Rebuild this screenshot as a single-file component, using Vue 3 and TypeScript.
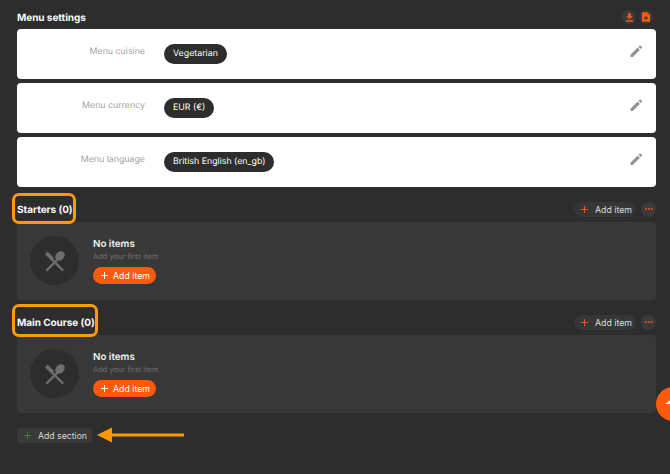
<script setup lang="ts">
interface Setting { label: string; value: string }
const settings: Setting[] = [
  { label: 'Menu cuisine', value: 'Vegetarian' },
  { label: 'Menu currency', value: 'EUR (€)' },
  { label: 'Menu language', value: 'British English (en_gb)' },
]
const sections: string[] = ['Starters (0)', 'Main Course (0)']
</script>

<template>
  <div class="page">
    <header class="top">
      <h1>Menu settings</h1>
      <div class="top-icons">
        <span class="round">
          <svg width="7" height="9" viewBox="0 0 10 12"><path d="M3 0h4v4h2.600L5 8.400.4 4H3zM0 10h10v2H0z" fill="#ff5a0a"/></svg>
        </span>
        <span class="round">
          <svg width="8" height="10" viewBox="0 0 10 12"><path fill-rule="evenodd" d="M0 0h6.500L10 3.500V12H0zM5 5.200a2 2 0 1 0 0 4a2 2 0 0 0 0-4z" fill="#ff5a0a"/></svg>
        </span>
      </div>
    </header>

    <div class="cards">
      <div v-for="s in settings" :key="s.label" class="card">
        <span class="label">{{ s.label }}</span>
        <span class="pill">{{ s.value }}</span>
        <svg class="pencil" width="12" height="12" viewBox="0 0 12 12"><path d="M.5 12V9.700L7.600 2.600 9.900 4.900 2.800 12zM8.400 1.800 9.500.7a1 1 0 0 1 1.300 0l1 1a1 1 0 0 1 0 1.300l-1.100 1.100z" fill="#949494"/></svg>
      </div>
    </div>

    <section v-for="name in sections" :key="name" class="section">
      <div class="sec-head">
        <h2 class="sec-title">{{ name }}</h2>
        <div class="sec-actions">
          <button class="ghost">
            <svg class="cross" width="7" height="7" viewBox="0 0 7 7"><path d="M3 0h1v3h3v1H4v3H3V4H0V3h3z" fill="#f0561a"/></svg>
            Add item
          </button>
          <span class="more"><i></i><i></i><i></i></span>
        </div>
      </div>
      <div class="panel">
        <div class="disc">
          <svg width="22" height="22" viewBox="0 0 22 22">
            <path d="M7 8.500 18.500 20" stroke="#6e6e6e" stroke-width="2.400" stroke-linecap="round"/>
            <path d="M3.500 1.500 10 8 7.500 10.500 1 4.500z" fill="#6e6e6e"/>
            <path d="M3 20 12.500 10.500" stroke="#6e6e6e" stroke-width="2.400" stroke-linecap="round"/>
            <ellipse cx="16" cy="6" rx="5.400" ry="4.100" transform="rotate(-45 16 6)" fill="#6e6e6e"/>
          </svg>
        </div>
        <div class="empty">
          <strong>No items</strong>
          <small>Add your first item</small>
          <button class="primary">
            <svg class="cross" width="7" height="7" viewBox="0 0 7 7"><path d="M3 0h1v3h3v1H4v3H3V4H0V3h3z" fill="#fff"/></svg>
            Add item
          </button>
        </div>
      </div>
    </section>

    <button class="add-section">
      <svg class="cross" width="7" height="7" viewBox="0 0 7 7"><path d="M3 0h1v3h3v1H4v3H3V4H0V3h3z" fill="#b04a20"/></svg>
      Add section
    </button>

    <div class="hl hl-a"></div>
    <div class="hl hl-b"></div>
    <svg class="arrow" width="90" height="18" viewBox="0 0 90 18">
      <path d="M16 7.500h72v3H16z" fill="#ff9800"/>
      <path d="M1 9 16 1.500v15z" fill="#ff9800"/>
    </svg>
    <div class="fab"><span></span></div>
  </div>
</template>

<style>
html, body { margin: 0; background: #2d2d2d; }
</style>

<style scoped>
.page {
  position: relative;
  width: 670px;
  height: 474px;
  overflow: hidden;
  box-sizing: border-box;
  padding: 8px 14px 0 17px;
  background: #2d2d2d;
  color: #fff;
  font-family: Inter, "Liberation Sans", sans-serif;
  text-rendering: geometricPrecision;
}
.top { display: flex; justify-content: space-between; align-items: center; height: 18px; margin-bottom: 3px; }
h1 { margin: 0; padding-top: 1px; font-size: 10px; font-weight: 700; letter-spacing: -.05px; color: #f8f8f8; }
.top-icons { display: flex; gap: 3px; margin-right: 3px; }
.round { width: 14px; height: 14px; border-radius: 50%; background: #3a3a3a; display: flex; align-items: center; justify-content: center; }
.cards { display: flex; flex-direction: column; gap: 4px; }
.card { position: relative; height: 50px; background: #fff; border-radius: 4px; display: flex; align-items: flex-start; }
.label { width: 128px; text-align: right; margin-top: 17px; font-size: 8.800px; line-height: 11px; color: #a3a3a3; }
.pill { margin: 15px 0 0 19px; height: 20px; padding: 0 9px; line-height: 20px; border-radius: 10px; background: #2d2d2d; color: #fff; font-size: 8.800px; }
.pencil { position: absolute; right: 14px; top: 16px; }
.section { margin-top: 8px; }
.sec-head { display: flex; justify-content: space-between; align-items: center; height: 27px; padding-top: 1px; box-sizing: border-box; }
.sec-title { margin: 0; padding-top: 1px; font-size: 10px; font-weight: 700; letter-spacing: -.05px; color: #f8f8f8; }
.sec-actions { display: flex; align-items: center; gap: 5px; }
button { font-family: inherit; border: 0; padding: 0; white-space: nowrap; }
.cross { flex: none; }
.ghost { height: 15px; width: 62px; border-radius: 8px; background: #363636; color: #ddd; font-size: 8.800px; display: flex; align-items: center; gap: 7px; padding-left: 7px; box-sizing: border-box; }
.more { width: 15px; height: 15px; border-radius: 50%; background: #3a3a3a; display: flex; gap: 1px; align-items: center; justify-content: center; }
.more i { width: 2px; height: 2px; border-radius: 1px; background: #f0561a; }
.panel { height: 78px; background: #383838; border-radius: 4px; display: flex; align-items: flex-start; padding: 14px 0 0 13px; box-sizing: border-box; }
.disc { width: 49px; height: 49px; border-radius: 50%; background: #2d2d2d; display: flex; align-items: center; justify-content: center; }
.empty { margin-left: 14px; display: flex; flex-direction: column; align-items: flex-start; }
.empty strong { font-size: 9.800px; line-height: 14px; font-weight: 600; color: #f2f2f2; margin-top: 2px; }
.empty small { font-size: 7.500px; line-height: 11px; color: #6f6f6f; margin-top: -1px; }
.primary { margin-top: 5px; width: 63px; height: 17px; border-radius: 9px; background: #ff5a0a; color: #fff; font-size: 8.800px; display: flex; align-items: center; gap: 5px; padding-left: 8px; box-sizing: border-box; }
.add-section { margin-top: 15px; display: flex; align-items: center; gap: 7px; width: 75px; height: 15px; padding-left: 7px; box-sizing: border-box; border-radius: 3px; background: #393939; color: #d8d8d8; font-size: 8.700px; }
.hl { position: absolute; border: 3px solid #ff9a0a; border-radius: 7px; box-sizing: border-box; }
.hl-a { left: 12px; top: 193px; width: 64px; height: 31px; }
.hl-b { left: 12px; top: 304px; width: 86px; height: 33px; }
.arrow { position: absolute; left: 96px; top: 426px; }
.fab { position: absolute; left: 656px; top: 387px; width: 34px; height: 34px; border-radius: 50%; background: #ff5a0a; overflow: hidden; }
.fab span { position: absolute; left: 9px; top: 11px; width: 0; height: 0; border-left: 8px solid transparent; border-right: 8px solid transparent; border-bottom: 6px solid #fff; }
</style>
